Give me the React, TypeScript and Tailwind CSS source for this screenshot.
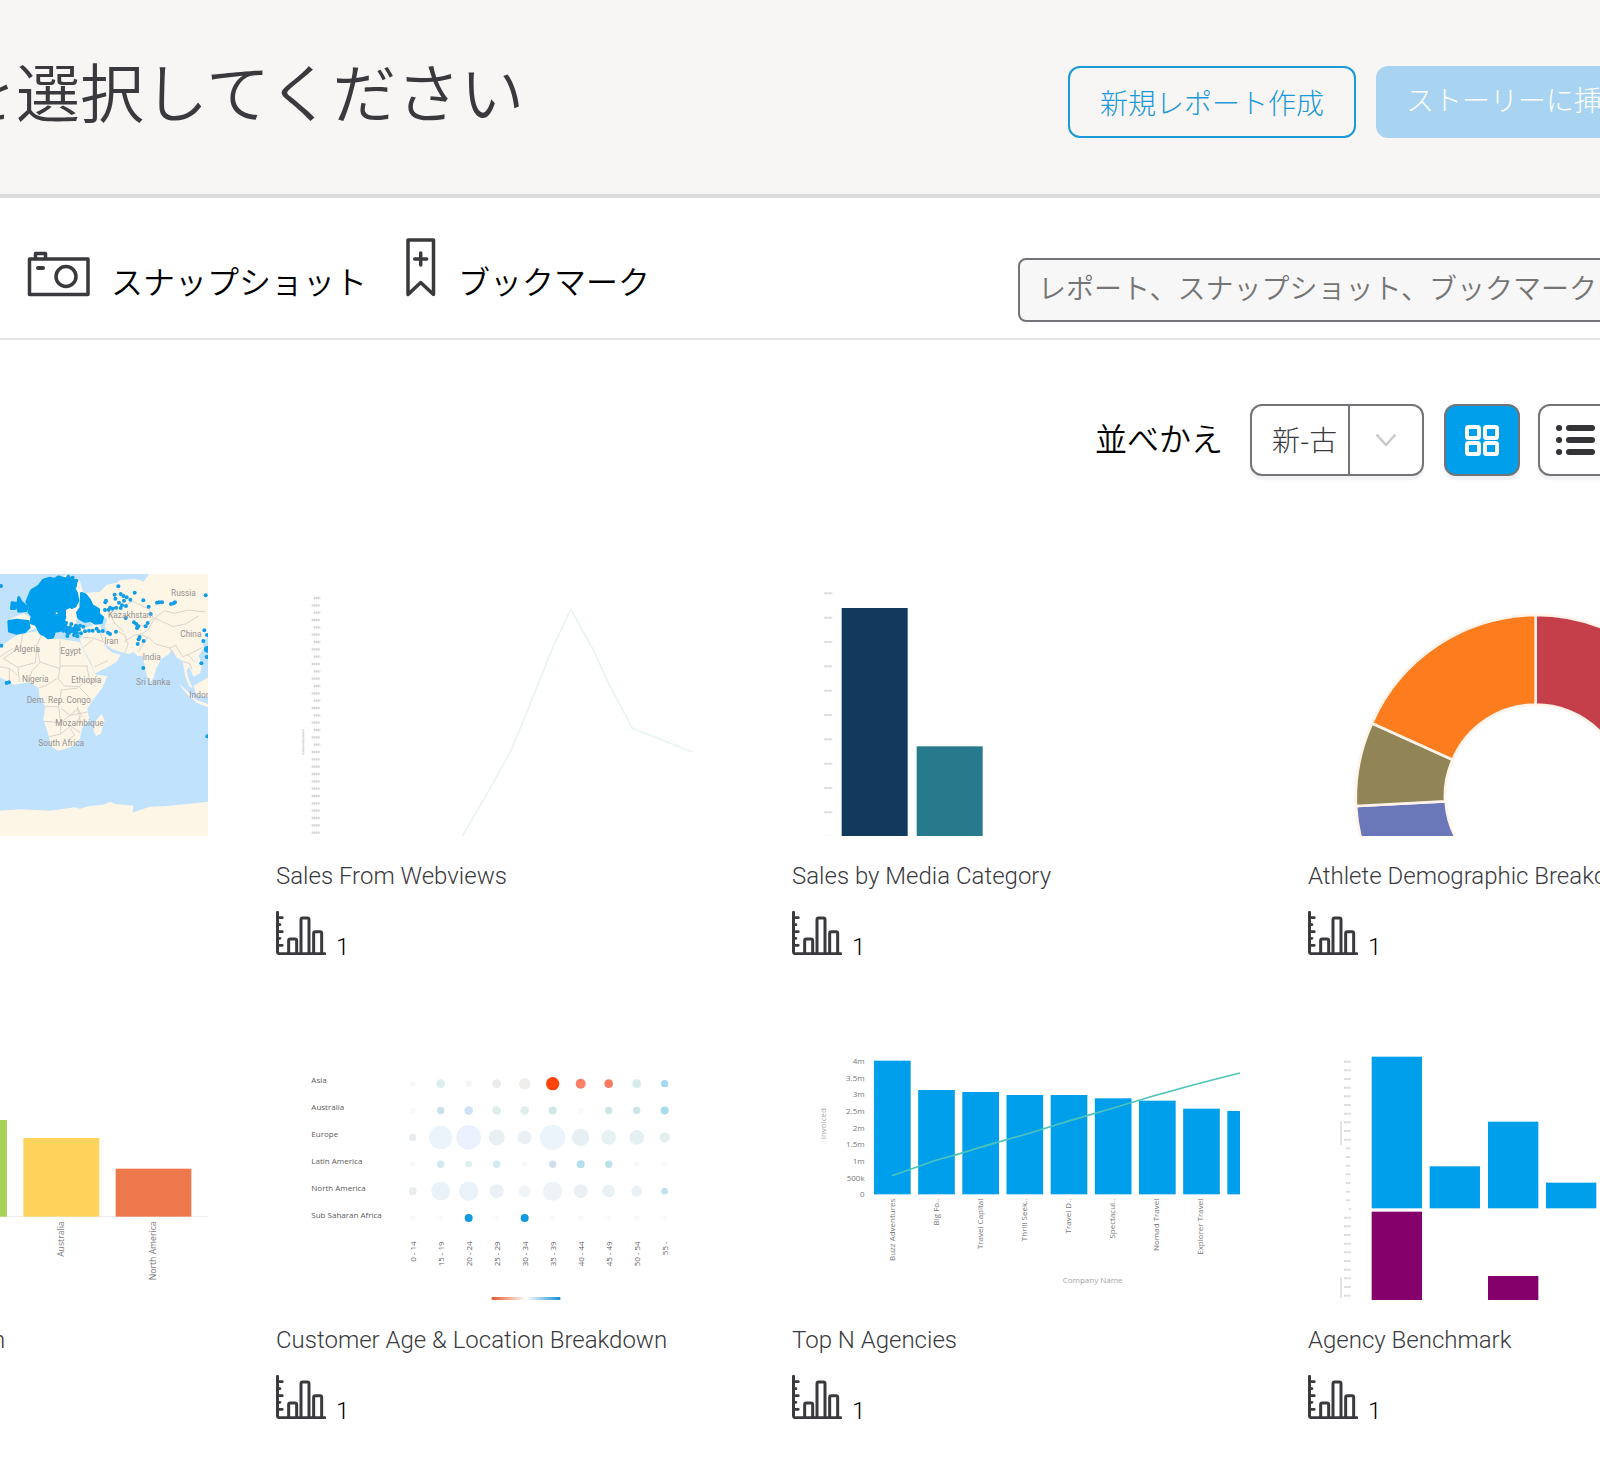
import { useState } from 'react';
import type { ReactNode } from 'react';

interface Report {
  id: string;
  title?: string;
  titleClass?: string;
  count?: number;
  thumb: ReactNode;
}

const chartFont = "font-['Open_Sans',sans-serif] font-normal";

function CameraIcon() {
  return (
    <svg className="w-16 h-12 mb-px" viewBox="0 0 64 48" fill="none" stroke="#3a3a3e" strokeWidth="3.5" strokeLinejoin="round" strokeLinecap="round" aria-hidden="true">
      <rect x="3.500" y="10" width="58.500" height="35.5" />
      <path d="M9.500 9V4.500h10V9" />
      <path d="M12 19h5" strokeWidth="4" />
      <circle cx="40" cy="27.5" r="10" />
    </svg>
  );
}

function BookmarkIcon() {
  return (
    <svg className="w-8 h-16" viewBox="0 0 32 64" fill="none" stroke="#3a3a3e" strokeWidth="3.5" strokeLinejoin="round" strokeLinecap="round" aria-hidden="true">
      <path d="M3 6h25.500v54.500L15.700 48.500 3 60.500z" />
      <path d="M15.700 19v12M9.700 25h12" />
    </svg>
  );
}

function ChartIcon() {
  return (
    <svg className="w-[50px] h-11" viewBox="0 0 150 132" fill="none" stroke="#3a3a3e" strokeWidth="9" strokeLinecap="round" aria-hidden="true">
      <path d="M4.500 4v118q0 6 6 6H146" strokeWidth="9" strokeLinejoin="round" />
      <path d="M8 20h11M8 62h11M8 103h11" strokeWidth="8" />
      <path d="M8 41h4M8 82h4" strokeWidth="8" />
      <path d="M38 126V89q0-5 5-5h14q5 0 5 5v37" />
      <path d="M75 126V26q0-5 5-5h14q5 0 5 5v100" />
      <path d="M113 126V67q0-5 5-5h14q5 0 5 5v59" />
    </svg>
  );
}

const mapDots = [
  [3, 78], [4, 257], [20, 369], [27, 367], [229, 62], [218, 53], [205, 50], [355, 79], [404, 98], [430, 121],
  [316, 127], [318, 122], [344, 104], [346, 116], [362, 102], [370, 108], [380, 112], [391, 119], [372, 122],
  [357, 128], [366, 136], [378, 138], [348, 143], [338, 146], [326, 149], [315, 150], [330, 143], [362, 144],
  [471, 128], [478, 127], [486, 127], [513, 132], [521, 130], [525, 127], [446, 140], [452, 162], [377, 174],
  [402, 187], [409, 192], [415, 199], [411, 204], [437, 199], [443, 189], [419, 231], [431, 243], [413, 252], [416, 238],
  [430, 324], [617, 106], [613, 211], [610, 243], [621, 225], [604, 310], [620, 291], [622, 529],
  [348, 215], [330, 222], [324, 218], [308, 213], [296, 214], [290, 206], [278, 212], [267, 212], [255, 214],
  [250, 200], [237, 208], [231, 218], [222, 225], [215, 213], [228, 197], [232, 229], [210, 202], [196, 205],
  [204, 218], [190, 212], [243, 220], [214, 192], [240, 197], [232, 205], [202, 228],
];

function MapThumb() {
  return (
    <svg className="block w-full" viewBox="-720 42 1344 786" role="img" aria-label="World map">
      <rect x="-720" y="42" width="1344" height="786" fill="#c0e2fd" />
      <g fill="#fdf6e7">
        <path d="M30 215L25 180 70 160 95 175 100 90 140 60 200 44 240 62 250 100 300 95 320 74 350 68 372 52 420 60 430 66 448 42H624V232L606 246 612 262 596 288 606 315 600 340 580 350 568 322 560 330 566 358 578 384 568 380 556 352 548 304 528 290 518 270 506 282 484 298 470 322 462 350 452 366 440 346 432 306 428 288 412 288 400 276 386 282 356 274 334 266 310 246 322 266 338 278 362 284 350 306 322 322 286 340 272 306 248 262 240 240 250 220 220 222 190 210 160 205 120 200 90 212 60 222z" />
        <path d="M40 232L60 222 112 214 124 228 160 238 176 236 240 246 252 272 270 308 288 344 322 348 308 382 276 424 262 446 268 480 246 505 240 536 216 560 176 572 156 562 142 515 130 478 136 440 118 408 116 384 88 366 42 374 0 352V262z" />
        <path d="M304 462L314 480 302 522 288 528 280 510 286 484z" />
        <path d="M536 370L552 384 590 420 624 432V442L590 428 560 402zM580 378L624 352V412L590 404z" />
        <path d="M0 752L60 748 150 752 225 742 240 746 268 738 310 734 330 725 346 732 400 737 398 758 420 750 450 740 500 738 560 732 624 725V828H-720V780z" />
      </g>
      <path d="M318 42l24 10 32-8 52-2-30 16-40 2-30-8zM290 175l18-8 14 12-8 18 8 18-12 6-10-26zM228 178l30 4 24 14-30 8-24-10z" fill="#c0e2fd" />
      <g fill="none" stroke="#dcd3cb" strokeWidth="3">
        <path d="M68 222l-6 38-52 36 44 26 52-14 4-50 14-32M110 256l10 52M120 306l60 20V240M180 318h84M180 326l-6 30 20 22 44 2 30-24-8-38M54 322l4 44M0 320l30 6 22 20M28 326v42M86 366l10-34 24-24M116 384l24-8 30-20M136 440h40l8-50 50-6M176 440l6 48-50-4M182 488l28-22 52-10M210 466l-26-20M182 488v34l-34 8M182 522l30-24 28 20M232 440l10 50M208 500l16 26-20 14M268 372l24-26M238 382l30 30M0 290l40-26" />
        <path d="M250 232l30 2 30 12M250 262l30-24M284 320l40-18M310 245l-10-30M352 214l22 10 10 30-10 24M372 246l30-20 22-4 18 12-28 42M372 214l-26-22-14-24 26-24 40-20 50 24 12 26-26 24-36-6M464 174l30-22 30 8 40-10 52 6M464 174l26 12 30 14 36-8 40-24M442 228l24 24 44 12 20-10M424 222l20-12 20-36M510 264l10 26M528 258l20 32 16-6 20 22M564 284l24-12 20-10M548 304l20 6 8 18" />
      </g>
      <path d="M210 466l24-20 10 20-12 18" fill="none" stroke="#e2c6c4" strokeWidth="2.500" />
      <g fill="#009fee" stroke="#009fee" strokeWidth="8" strokeLinejoin="round">
        <path d="M94 92l22-14 14-18 20-6 12 4 14-8 20 6 20-2 12 16-2 10-6 0 10 20 4 22-8 16-16 8-14 8-2 22 6 12-6 16-14 8-16 2-6 18-14 2-10-8-12-6-14-26-16-6 4-20-10-12 4-14-10-16z" />
        <path d="M26 184l24-4 34 4 4 18-14 14-26 4-20-6z" />
        <path d="M56 112l8 14 18 16-4 10-22 2-4-14zM36 128l14 2-6 16-10 0z" />
        <path d="M244 100l12 4 14 18 6 14 20 12 0 14 12 10-4 16-18 2-14-8-18 2-18-10-4-16 10-14z" />
        <path d="M190 194l14 10 8 12-8 6-12-14zM216 208l12-10 4 10-8 12z" />
      </g>
      <g fill="#fdf6e7">
        <path d="M198 150l12-6 10 8-8 12-14 4z" />
        <circle cx="170" cy="160" r="3" />
        <circle cx="200" cy="180" r="4" />
      </g>
      {mapDots.map(([cx, cy], i) => (
        <circle key={i} cx={cx} cy={cy} r="6" fill="#109ee8" />
      ))}
      <circle cx="622" cy="268" r="10" fill="#109ee8" />
      <g className="font-[Roboto,sans-serif] font-normal" fontSize="25" fill="#96918f">
        <text x="42" y="276">Algeria</text>
        <text x="181" y="282">Egypt</text>
        <text x="66" y="366">Nigeria</text>
        <text x="214" y="370">Ethiopia</text>
        <text x="80" y="428">Dem. Rep. Congo</text>
        <text x="166" y="499">Mozambique</text>
        <text x="115" y="557">South Africa</text>
        <text x="513" y="109">Russia</text>
        <text x="324" y="175">Kazakhstan</text>
        <text x="313" y="252">Iran</text>
        <text x="541" y="231">China</text>
        <text x="428" y="299">India</text>
        <text x="408" y="375">Sri Lanka</text>
        <text x="568" y="413">Indonesia</text>
      </g>
    </svg>
  );
}

function LineThumb() {
  const ticks = Array.from({ length: 33 }, (_, i) => 84 + i * 22);
  return (
    <svg className="block w-full" viewBox="48 12 1344 786" role="img" aria-label="Line chart">
      {ticks.map((y, i) => (
        <path key={y} d={i % 2 && i < 20 || i > 20 ? `M155 ${y}h25` : `M161 ${y}h20`} stroke="#d4d4d4" strokeWidth="7" strokeDasharray="5 1" />
      ))}
      <path d="M130 478v76" stroke="#d9d9d9" strokeWidth="6" strokeDasharray="6 1" />
      <path d="M608 797L690 655 754 540 820 378 876 238 932 117 1000 240 1046 340 1117 475 1298 546" fill="none" stroke="#e9f3f3" strokeWidth="5" />
    </svg>
  );
}

function MediaThumb() {
  const ticks = Array.from({ length: 11 }, (_, i) => 70 + i * 73);
  return (
    <svg className="block w-full" viewBox="36 12 1344 786" role="img" aria-label="Bar chart">
      {ticks.map((y) => (
        <path key={y} d={`M133 ${y}h24`} stroke="#dadada" strokeWidth="6" strokeDasharray="6 1" />
      ))}
      <rect x="185" y="114" width="198" height="700" fill="#113a5d" />
      <rect x="410" y="529" width="198" height="300" fill="#277a8b" />
    </svg>
  );
}

function DonutThumb() {
  return (
    <svg className="block w-full" viewBox="54 12 1344 786" role="img" aria-label="Donut chart">
      <g stroke="#fff3ea" strokeWidth="8">
        <path d="M737 135A540 540 0 0 1 1277 675H1008A271 271 0 0 0 737 404z" fill="#c43f49" />
        <path d="M198 708A540 540 0 0 0 737 1216V947A271 271 0 0 1 467 694z" fill="#6a77b8" />
        <path d="M246 460A540 540 0 0 0 198 708L465 694A271 271 0 0 1 488 569z" fill="#918557" />
        <path d="M737 135A540 540 0 0 0 246 460L488 569A271 271 0 0 1 737 404z" fill="#fc7c1e" />
      </g>
    </svg>
  );
}

function RegionThumb() {
  return (
    <svg className="block w-full" viewBox="-720 -6 1344 786" role="img" aria-label="Bar chart by region">
      <path d="M-600 530H624" stroke="#ececec" strokeWidth="3" />
      <rect x="-206" y="240" width="227" height="290" fill="#a8d25a" />
      <rect x="70" y="294" width="228" height="236" fill="#ffd35c" />
      <rect x="347" y="386" width="227" height="144" fill="#ec784b" />
      <g className={chartFont} fontSize="26" fill="#777" textAnchor="end">
        <text transform="translate(192 544) rotate(-90)">Australia</text>
        <text transform="translate(469 544) rotate(-90)">North America</text>
      </g>
    </svg>
  );
}

const ageCols = ['0 - 14', '15 - 19', '20 - 24', '25 - 29', '30 - 34', '35 - 39', '40 - 44', '45 - 49', '50 - 54', '55 -'];

// one [radius, colour] pair per age group
const bubbleRows: { name: string; cells: [number, string][] }[] = [
  { name: 'Asia', cells: [[9, '#f8f8f8'], [13, '#deeeee'], [9, '#f6f4f3'], [13, '#ebebeb'], [17, '#f0eeec'], [20, '#ff430a'], [15, '#fb8067'], [13, '#fa7a60'], [13, '#d5ebeb'], [11, '#a6d8f2']] },
  { name: 'Australia', cells: [[9, '#f8f8f8'], [11, '#c8e1ea'], [13, '#cfe3f5'], [13, '#deeeec'], [13, '#deeeee'], [12, '#cfe9e6'], [8, '#f8f8f8'], [11, '#cce6e8'], [11, '#cae7e8'], [12, '#a8dbee']] },
  { name: 'Europe', cells: [[11, '#e8ecee'], [35, '#ebf3fb'], [37, '#ebf1fc'], [24, '#e8f0f4'], [21, '#ebf0f5'], [38, '#eaf4fa'], [26, '#e6f0f4'], [22, '#e6f1f3'], [22, '#e4f0f4'], [15, '#e3eeee']] },
  { name: 'Latin America', cells: [[8, '#fafafa'], [11, '#d2e8f0'], [10, '#dfeef2'], [11, '#d3e9f0'], [8, '#fafafa'], [11, '#cfdfee'], [12, '#b5dfed'], [11, '#bde1ea'], [8, '#fafafa'], [7, '#f9f9f9']] },
  { name: 'North America', cells: [[12, '#e9edf0'], [28, '#eaf2f9'], [29, '#e9f2f8'], [21, '#eaf0f5'], [18, '#eef4f8'], [29, '#edf3f7'], [21, '#ebf0f5'], [19, '#eaf1f4'], [16, '#eaf0f3'], [10, '#bfe0ec']] },
  { name: 'Sub Saharan Africa', cells: [[9, '#fafafa'], [7, '#fafafa'], [12, '#149ae0'], [7, '#fafafa'], [12, '#149ae0'], [8, '#fafafa'], [8, '#fafafa'], [7, '#fafafa'], [8, '#fafafa'], [7, '#fafafa']] },
];

function BubbleThumb() {
  return (
    <svg className="block w-full" viewBox="48 -6 1344 786" role="img" aria-label="Bubble chart">
      <defs>
        <linearGradient id="scale">
          <stop offset="0" stopColor="#e8562a" />
          <stop offset="0.5" stopColor="#ffffff" />
          <stop offset="1" stopColor="#1590d4" />
        </linearGradient>
      </defs>
      <g className={chartFont} fontSize="24" fill="#5c5c5c">
        {bubbleRows.map((row, r) => (
          <text key={row.name} x="154" y={130 + r * 81}>{row.name}</text>
        ))}
        {ageCols.map((age, c) => (
          <text key={age} transform={`translate(${467 + c * 84} 604) rotate(-90)`} textAnchor="end">{age}</text>
        ))}
      </g>
      {bubbleRows.map((row, r) =>
        row.cells.map(([radius, fill], c) => (
          <circle key={`${r}-${c}`} cx={458 + c * 84} cy={131 + r * 80.6} r={radius} fill={fill} />
        ))
      )}
      <rect x="695" y="771" width="206" height="9" fill="url(#scale)" />
    </svg>
  );
}

const agencies = [
  { name: 'Buzz Adventures', top: 62 },
  { name: 'Big Fo..', top: 150 },
  { name: 'Travel Capital', top: 156 },
  { name: 'Thrill Seek..', top: 165 },
  { name: 'Travel D..', top: 165 },
  { name: 'Spectacul..', top: 175 },
  { name: 'Nomad Travel', top: 182 },
  { name: 'Explorer Travel', top: 206 },
  { name: '', top: 213 },
];

function AgenciesThumb() {
  const scale = ['4m', '3.5m', '3m', '2.5m', '2m', '1.5m', '1m', '500k', '0'];
  return (
    <svg className="block w-full" viewBox="36 -6 1344 786" role="img" aria-label="Top agencies chart">
      <g className={chartFont} fontSize="24" fill="#777">
        {scale.map((label, i) => (
          <text key={label} x="254" y={72 + i * 50} textAnchor="end">{label}</text>
        ))}
        {agencies.map((a, i) => (
          <text key={i} transform={`translate(${345 + i * 132} 476) rotate(-90)`} textAnchor="end">{a.name}</text>
        ))}
        <text transform="translate(139 298) rotate(-90)" fill="#a5a5a5">Invoiced</text>
        <text x="848" y="729" fill="#a5a5a5">Company Name</text>
      </g>
      {agencies.map((a, i) => (
        <rect key={i} x={282 + i * 132.5} y={a.top} width="110" height={463 - a.top} fill="#009feb" />
      ))}
      <path d="M336 407L400 385 470 360 530 344 600 322 740 282 870 242 1000 204 1120 168 1250 132 1380 99" fill="none" stroke="#4cc4bd" strokeWidth="5" />
    </svg>
  );
}

function BenchmarkThumb() {
  const ticks = Array.from({ length: 28 }, (_, i) => 65 + i * 26);
  return (
    <svg className="block w-full" viewBox="54 -6 1344 786" role="img" aria-label="Benchmark chart">
      {ticks.map((y, i) => (
        <path key={y} d={i === 17 ? `M176 ${y}h8` : i > 9 && i < 17 ? `M168 ${y}h14` : `M162 ${y}h21`} stroke="#dadada" strokeWidth="6" strokeDasharray="6 1" />
      ))}
      <path d="M153 244v70M153 712v62" stroke="#dedede" strokeWidth="5" />
      <g fill="#009feb">
        <rect x="245" y="50" width="151" height="455" />
        <rect x="419" y="379" width="151" height="126" />
        <rect x="594" y="245" width="151" height="260" />
        <rect x="768" y="428" width="151" height="77" />
      </g>
      <g fill="#84006a">
        <rect x="245" y="515" width="151" height="280" />
        <rect x="594" y="708" width="151" height="90" />
      </g>
    </svg>
  );
}

const reports: Report[] = [
  { id: 'map', thumb: <MapThumb /> },
  { id: 'webviews', title: 'Sales From Webviews', count: 1, thumb: <LineThumb /> },
  { id: 'media', title: 'Sales by Media Category', count: 1, thumb: <MediaThumb /> },
  { id: 'athlete', title: 'Athlete Demographic Breakdown', count: 1, thumb: <DonutThumb /> },
  { id: 'region', title: 'n', titleClass: 'pl-[232px]', thumb: <RegionThumb /> },
  { id: 'age', title: 'Customer Age & Location Breakdown', count: 1, thumb: <BubbleThumb /> },
  { id: 'agencies', title: 'Top N Agencies', count: 1, thumb: <AgenciesThumb /> },
  { id: 'benchmark', title: 'Agency Benchmark', count: 1, thumb: <BenchmarkThumb /> },
];

function ReportCard({ report }: { report: Report }) {
  return (
    <article className="font-[Roboto,sans-serif]">
      {report.thumb}
      <h2 className={`mt-6 h-8 text-2xl leading-8 font-light whitespace-nowrap text-[#3a3a3e] ${report.titleClass || ''}`}>
        {report.title}
      </h2>
      {report.count && (
        <div className="mt-[19px] flex items-end gap-2.5">
          <ChartIcon />
          <span className="text-2xl leading-4 font-light text-black">{report.count}</span>
        </div>
      )}
    </article>
  );
}

export default function App() {
  const [view, setView] = useState('grid');
  const [sort, setSort] = useState('new');
  const [query, setQuery] = useState('');

  const viewClass = (name: string) =>
    `flex h-[72px] w-[76px] items-center justify-center rounded-xl border-2 border-[#737378] shadow-[0_4px_2px_#f1f1f3] ${
      view === name ? 'bg-[#009feb] text-white' : 'bg-white text-[#333338]'
    }`;

  return (
    <div className="overflow-x-clip bg-white font-['Noto_Sans_CJK_JP',sans-serif] font-light">
      <header className="border-b-4 border-[#dcdcdc] bg-[#f7f6f4]">
        <div className="-mr-[156px] flex items-start justify-between pt-[66px] pr-24 pb-14">
          <h1 className="-ml-12 text-[64px] leading-[46px] font-[350] whitespace-nowrap text-[#3a3a3e]">を選択してください</h1>
          <div className="flex gap-5">
            <button type="button" className="h-[72px] rounded-xl border-2 border-[#1b99d8] px-[30px] text-[28px] leading-8 whitespace-nowrap text-[#1b99d8]">
              新規レポート作成
            </button>
            <button type="button" className="h-[72px] rounded-xl bg-[#a8d3f1] px-[30px] pb-1.5 text-[28px] leading-8 whitespace-nowrap text-white">
              ストーリーに挿入
            </button>
          </div>
        </div>
      </header>

      <div className="border-b-2 border-[#e3e3e6]">
        <div className="-mr-[156px] flex items-end justify-between pt-[51px] pb-4">
          <nav className="flex items-end gap-[38px] pb-6 pl-[26px] text-[32px] leading-9 font-[350] text-black">
            <a href="#snapshots" className="flex items-end gap-[21px] whitespace-nowrap">
              <CameraIcon />
              スナップショット
            </a>
            <a href="#bookmarks" className="-mt-8 flex items-end gap-[21px] whitespace-nowrap">
              <BookmarkIcon />
              ブックマーク
            </a>
          </nav>
          <input
            type="search"
            aria-label="検索"
            value={query}
            onChange={(e) => setQuery(e.target.value)}
            placeholder="レポート、スナップショット、ブックマークを検索"
            className="h-16 w-[738px] rounded-lg border-2 border-[#737378] bg-[#f8f7f7] px-[18px] pb-1.5 text-[28px] font-[350] placeholder:text-[#757575]"
          />
        </div>
      </div>

      <main>
        <div className="-mr-[156px] flex items-center justify-end pt-16 pr-[142px]">
          <label htmlFor="sort" className="mr-[27px] pb-1.5 text-[32px] leading-8 font-[350] text-black">並べかえ</label>
          <div className="relative mr-5">
            <select
              id="sort"
              value={sort}
              onChange={(e) => setSort(e.target.value)}
              className="block h-[72px] w-[174px] appearance-none rounded-xl border-2 border-[#737378] bg-white pb-0.5 pl-5 text-[28px] text-[#3a3a3e] shadow-[0_4px_2px_#f1f1f3]"
            >
              <option value="new">新-古</option>
              <option value="old">古-新</option>
            </select>
            <span className="pointer-events-none absolute inset-y-0 right-0 flex w-[76px] items-center justify-center border-l-2 border-[#737378]">
              <svg className="h-4 w-6" viewBox="0 0 24 16" fill="none" stroke="#c9c9c9" strokeWidth="2.500" aria-hidden="true">
                <path d="M1.500 2.500L11 13 20.500 2.500" />
              </svg>
            </span>
          </div>
          <div className="flex gap-[18px]">
            <button type="button" aria-label="グリッド表示" className={viewClass('grid')} onClick={() => setView('grid')}>
              <svg className="h-8 w-9" viewBox="0 0 36 32" fill="none" stroke="currentColor" strokeWidth="4" aria-hidden="true">
                <rect x="3" y="3" width="12" height="11" rx="1.500" />
                <rect x="21" y="3" width="12" height="11" rx="1.500" />
                <rect x="3" y="19" width="12" height="11" rx="1.500" />
                <rect x="21" y="19" width="12" height="11" rx="1.500" />
              </svg>
            </button>
            <button type="button" aria-label="リスト表示" className={viewClass('list')} onClick={() => setView('list')}>
              <svg className="h-8 w-10" viewBox="0 0 40 32" stroke="currentColor" strokeWidth="6" strokeLinecap="round" aria-hidden="true">
                <path d="M3 4h.1M3 16h.1M3 28h.1M13 4h23M13 16h23M13 28h23" />
              </svg>
            </button>
          </div>
        </div>

        <div className="-mr-[156px] -ml-[240px] grid grid-cols-4 gap-x-[68px] gap-y-[83px] pt-[98px] pb-[61px]">
          {reports.map((report) => (
            <ReportCard key={report.id} report={report} />
          ))}
        </div>
      </main>
    </div>
  );
}
